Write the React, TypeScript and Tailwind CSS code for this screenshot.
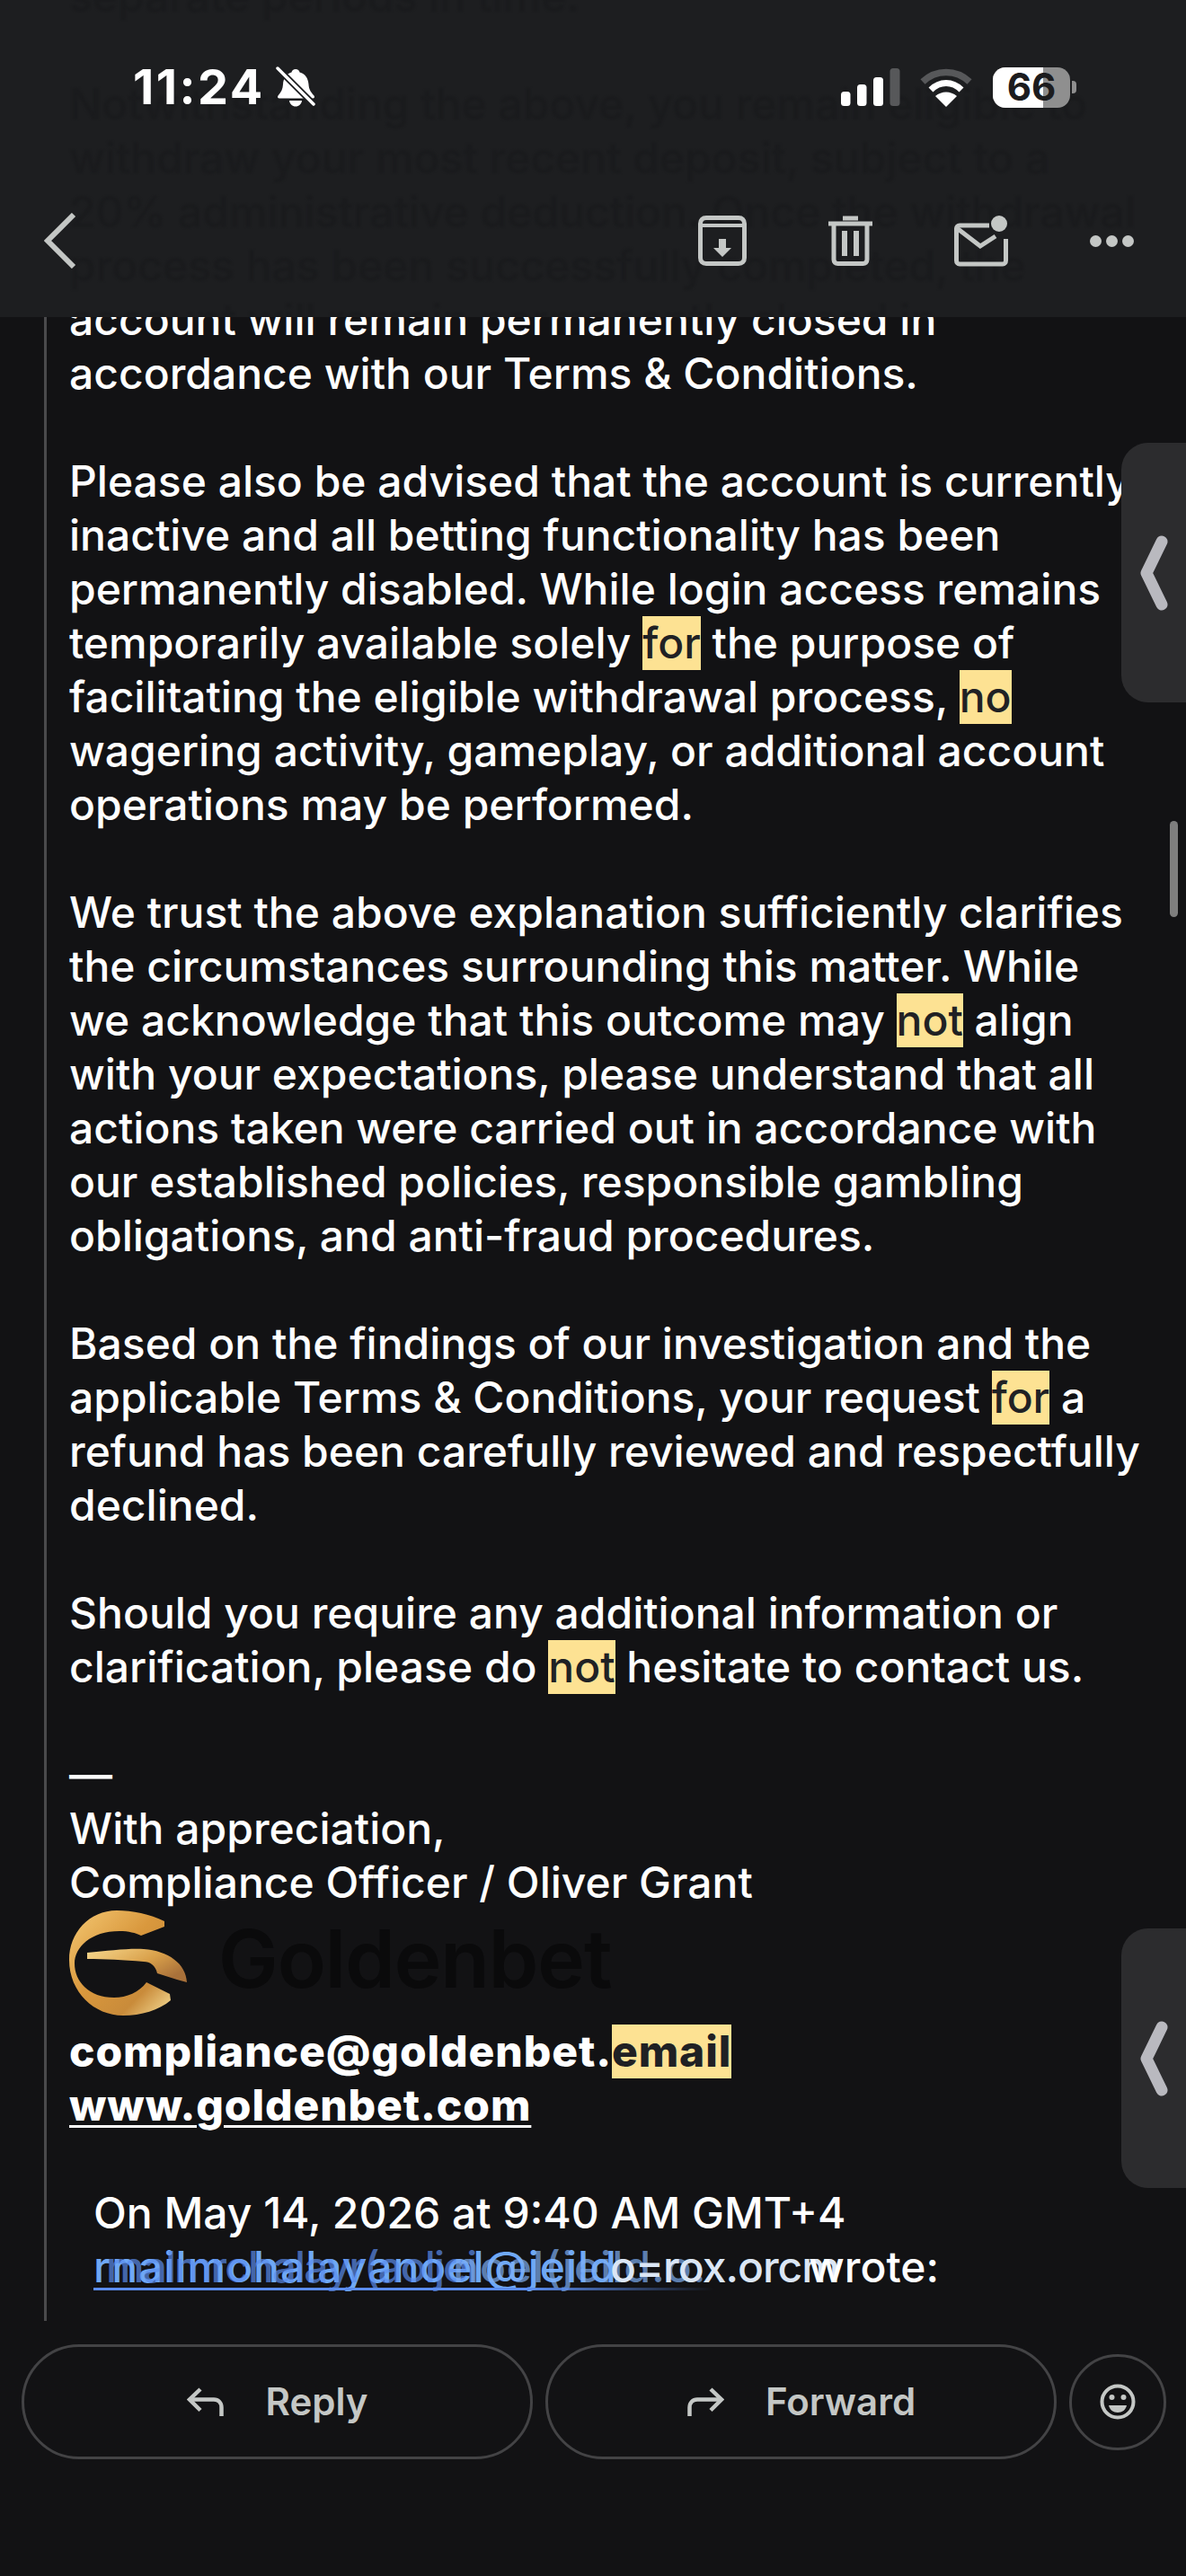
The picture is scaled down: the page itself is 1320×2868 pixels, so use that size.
const Mark = ({ children }: { children: React.ReactNode }) => (
  <span className="inline-block bg-[#fde293] text-[#202124] leading-[60px]">{children}</span>
);

const Bell = () => (
  <svg width="46" height="46" viewBox="0 0 46 46" className="ml-[11px]">
    <path d="M23 3c2.500 0 4 1.500 4.500 3.500C33.500 8 37 13 37.500 20c.300 5 2 8 6 12.500 1 1.200.500 3-1.500 3H5c-2 0-2.500-1.800-1.500-3C7 28.500 8.700 25 9 20c.300-7 4-12 9.500-13.500C19 4.500 20.500 3 23 3z" fill="#fff" />
    <path d="M16 38h14c-.500 4-3.500 6.500-7 6.500s-6.500-2.500-7-6.500z" fill="#fff" />
    <path d="M4 3l40 40" stroke="#1d1e20" strokeWidth="7" />
    <path d="M3 2l40 40" stroke="#fff" strokeWidth="3.500" strokeLinecap="round" />
  </svg>
);

const Signal = () => (
  <svg width="66" height="42" viewBox="0 0 66 42">
    <rect x="0" y="26" width="10.500" height="16" rx="3.500" fill="#fff" />
    <rect x="18" y="18" width="10.500" height="24" rx="3.500" fill="#fff" />
    <rect x="36" y="10" width="11" height="32" rx="3.500" fill="#fff" />
    <rect x="54.500" y="0" width="11" height="42" rx="3.500" fill="#57585a" />
  </svg>
);

const Wifi = () => (
  <svg width="58" height="43" viewBox="0 0 58 43" className="ml-[22px]">
    <path d="M3 15C18 1 40 1 55 15" fill="none" stroke="#57585a" strokeWidth="7.500" />
    <path d="M12 24C22 14 36 14 46 24" fill="none" stroke="#fff" strokeWidth="7" />
    <path d="M29 43L17 31c7-6 17-6 24 0z" fill="#fff" />
  </svg>
);

const Battery = () => (
  <div className="ml-[23px] flex items-center">
    <div className="relative flex h-[45px] w-[86px] items-center justify-center overflow-hidden rounded-[14px] bg-[#8f8f8f]">
      <div className="absolute inset-y-0 left-0 w-[56px] bg-white" />
      <span className="relative text-[42px] font-bold leading-none text-[#1c1c1e]">66</span>
    </div>
    <div className="ml-[2px] h-[14px] w-[5px] rounded-r-[4px] bg-[#8f8f8f]" />
  </div>
);

const Tab = ({ top }: { top: string }) => (
  <div className={`absolute right-0 ${top} flex h-[289px] w-[72px] items-center rounded-l-[30px] bg-[#2c2c2e] pl-[20px]`}>
    <svg width="32" height="84" viewBox="0 0 32 84">
      <path d="M25 7L8 42l17 35" fill="none" stroke="#b9b9bf" strokeWidth="13" strokeLinecap="round" strokeLinejoin="round" />
    </svg>
  </div>
);

export default function App() {
  return (
    <div className="relative h-[2868px] w-[1320px] overflow-hidden bg-[#121214] font-['Inter','Noto_Sans',sans-serif] text-[48px] font-medium leading-[60px] text-white">
      <main className="-mt-[34px]">
        <div className="ml-[49px] h-[2618px] whitespace-nowrap border-l-[3px] border-[#4a4a4c] pl-[25px]">
          <p className="mb-[60px]">
            separate periods in time.
          </p>
          <p className="mb-[60px]">
            Notwithstanding the above, you remain eligible to<br />
            withdraw your most recent deposit, subject to a<br />
            20% administrative deduction. Once the withdrawal<br />
            process has been successfully completed, the<br />
            account will remain permanently closed in<br />
            accordance with our Terms &amp; Conditions.
          </p>
          <p className="mb-[60px]">
            Please also be advised that the account is currently<br />
            inactive and all betting functionality has been<br />
            permanently disabled. While login access remains<br />
            temporarily available solely <Mark>for</Mark> the purpose of<br />
            facilitating the eligible withdrawal process, <Mark>no</Mark><br />
            wagering activity, gameplay, or additional account<br />
            operations may be performed.
          </p>
          <p className="mb-[60px]">
            We trust the above explanation sufficiently clarifies<br />
            the circumstances surrounding this matter. While<br />
            we acknowledge that this outcome may <Mark>not</Mark> align<br />
            with your expectations, please understand that all<br />
            actions taken were carried out in accordance with<br />
            our established policies, responsible gambling<br />
            obligations, and anti-fraud procedures.
          </p>
          <p className="mb-[60px]">
            Based on the findings of our investigation and the<br />
            applicable Terms &amp; Conditions, your request <Mark>for</Mark> a<br />
            refund has been carefully reviewed and respectfully<br />
            declined.
          </p>
          <p className="mb-[60px]">
            Should you require any additional information or<br />
            clarification, please do <Mark>not</Mark> hesitate to contact us.
          </p>
          <p>
            —<br />
            With appreciation,<br />
            Compliance Officer / Oliver Grant
          </p>
          <div className="box-border flex h-[128px] items-center pb-[8px]">
            <svg width="134" height="120" viewBox="0 -2 134 120">
              <defs>
                <linearGradient id="gold" x1="0" y1="0" x2="1" y2="1">
                  <stop offset="0" stopColor="#f4c873" />
                  <stop offset="0.45" stopColor="#d9983d" />
                  <stop offset="0.75" stopColor="#c98b3a" />
                  <stop offset="1" stopColor="#f7e09a" />
                </linearGradient>
                <linearGradient id="arm" x1="0" y1="0" x2="1" y2="0.6">
                  <stop offset="0" stopColor="#f6d88e" />
                  <stop offset="0.6" stopColor="#d9a04a" />
                  <stop offset="1" stopColor="#a9713a" />
                </linearGradient>
              </defs>
              <path d="M106 11C90 3 70-1 53-1 22-1 0 24 0 54c0 36 28 62 60 62 20 0 40-6 53-17l-1-7-26-13C78 90 64 96 50 96 22 96 6 78 6 58 6 40 24 22 56 22c10 0 18 2 24 5l26-10z" fill="url(#gold)" />
              <path d="M20 46c25-2 45-5 63-4 27 2 47 16 48 37l-11-3-22-7c-2-9-8-13-15-13-23-2-43-3-63-3z" fill="url(#arm)" />
            </svg>
            <span className="ml-[32px] pb-[11px] text-[89px] font-semibold leading-none tracking-[-1px] text-[#0a0a0b]">Goldenbet</span>
          </div>
          <p className="font-extrabold tracking-[0.9px]">
            compliance@goldenbet.<Mark>email</Mark><br />
            <span className="underline decoration-[3px] underline-offset-[5px]">www.goldenbet.com</span>
          </p>
          <div className="mt-[60px] pl-[27px]">
            <p>On May 14, 2026 at 9:40 AM GMT+4</p>
            <div className="relative h-[60px]">
              <span className="absolute left-0 top-0 tracking-[1px] text-[#6fa8f5]">rnailmohalayanoel@jeild</span>
              <span className="absolute left-[14px] top-0 tracking-[-2px] text-[#5b8def]/70">malmrchalayr(aoljei</span>
              <span className="absolute left-[400px] top-0 tracking-[1px] text-[#7fb0f5]/70">noel(jeild.o.</span>
              <span className="absolute left-[575px] top-0 tracking-[-1px] text-[#dbe6f5]">o=rox.orcm</span>
              <span className="absolute left-[796px] top-0">wrote:</span>
              <div className="absolute left-0 top-[53px] h-[3px] w-[690px] bg-linear-to-r from-[#5b8def] from-70% to-transparent" />
            </div>
          </div>
        </div>
        <div className="mt-[26px] flex items-center gap-[14px] pl-[24px] text-[42px] font-semibold text-[#c4c7c5]">
          <button className="flex h-[128px] w-[569px] items-center justify-center gap-[46px] rounded-full border-[3px] border-[#434345]">
            <svg width="42" height="33" viewBox="0 0 42 33" fill="none" stroke="#c4c7c5" strokeWidth="4.500">
              <path d="M15 2L3 13.500l12 12" />
              <path d="M3 13.500h27c5 0 8.500 3.500 8.500 9V32" />
            </svg>
            Reply
          </button>
          <button className="flex h-[128px] w-[569px] items-center justify-center gap-[46px] rounded-full border-[3px] border-[#434345]">
            <svg width="42" height="33" viewBox="0 0 42 33" fill="none" stroke="#c4c7c5" strokeWidth="4.500">
              <path d="M27 2l12 11.500-12 12" />
              <path d="M39 13.500H12c-5 0-8.500 3.500-8.500 9V32" />
            </svg>
            Forward
          </button>
          <button className="flex h-[107px] w-[108px] items-center justify-center rounded-full border-[3px] border-[#434345]">
            <svg width="40" height="40" viewBox="0 0 40 40">
              <circle cx="20" cy="20" r="17.500" fill="none" stroke="#c4c7c5" strokeWidth="4" />
              <circle cx="13.500" cy="15" r="3" fill="#c4c7c5" />
              <circle cx="26.500" cy="15" r="3" fill="#c4c7c5" />
              <path d="M10 24h20c-1 5-5 8-10 8s-9-3-10-8z" fill="#c4c7c5" />
            </svg>
          </button>
        </div>
      </main>

      <header className="absolute inset-x-0 top-0 h-[353px] overflow-hidden bg-[#1d1e20]">
        <div aria-hidden className="absolute left-[77px] -top-[34px] whitespace-nowrap text-[#1a1b1d] blur-[1px]">
          separate periods in time.<br /><br />
          Notwithstanding the above, you remain eligible to<br />
          withdraw your most recent deposit, subject to a<br />
          20% administrative deduction. Once the withdrawal<br />
          process has been successfully completed, the<br />
          account will remain permanently closed in
        </div>
        <div className="relative flex h-[50px] translate-y-[72px] items-center pl-[148px] pr-[122px]">
          <span className="text-[54px] font-bold leading-none tracking-[2.500px]">11:24</span>
          <Bell />
          <div className="ml-auto flex items-center">
            <Signal />
            <Wifi />
            <Battery />
          </div>
        </div>
        <div className="relative mt-[186px] flex h-[64px] items-center pl-[49px] pr-[58px]">
          <svg width="36" height="62" viewBox="0 0 36 62" fill="none" stroke="#c4c7c5" strokeWidth="6">
            <path d="M33 2L4 31l29 29" />
          </svg>
          <div className="ml-auto flex items-center gap-[91px]">
            <svg width="54" height="56" viewBox="0 0 54 56" fill="none">
              <path d="M9 2.500h36c4 0 6.500 2.500 6.500 6.500v38c0 4-2.500 6.500-6.500 6.500H9c-4 0-6.500-2.500-6.500-6.500V9c0-4 2.500-6.500 6.500-6.500z" stroke="#c4c7c5" strokeWidth="5" />
              <path d="M3 11h48" stroke="#c4c7c5" strokeWidth="4" />
              <path d="M23 26h8v10h6L27 46 17 36h6z" fill="#c4c7c5" />
            </svg>
            <svg width="49" height="56" viewBox="0 0 49 56" fill="none">
              <path d="M16 3h17" stroke="#c4c7c5" strokeWidth="5" />
              <path d="M0 9h49" stroke="#c4c7c5" strokeWidth="5" />
              <path d="M6 9v40c0 3 2 4.500 4.500 4.500h28c2.500 0 4.500-1.500 4.500-4.500V9" stroke="#c4c7c5" strokeWidth="5" />
              <rect x="15" y="17" width="6" height="28" fill="#c4c7c5" />
              <rect x="28" y="17" width="6" height="28" fill="#c4c7c5" />
            </svg>
            <svg width="60" height="57" viewBox="0 0 60 57" fill="none">
              <path d="M39 11H6C4 11 2.500 12.500 2.500 14.500V50C2.500 52.500 4 54 6 54h48c2 0 3.500-1.500 3.500-4V26" stroke="#c4c7c5" strokeWidth="5" />
              <path d="M3 14l26 20 17-11" stroke="#c4c7c5" strokeWidth="5" />
              <circle cx="50" cy="9" r="9" fill="#c4c7c5" />
            </svg>
            <div className="flex gap-[5px]">
              <div className="h-[13px] w-[13px] rounded-full bg-[#c4c7c5]" />
              <div className="h-[13px] w-[13px] rounded-full bg-[#c4c7c5]" />
              <div className="h-[13px] w-[13px] rounded-full bg-[#c4c7c5]" />
            </div>
          </div>
        </div>
      </header>

      <Tab top="top-[493px]" />
      <Tab top="top-[2147px]" />
      <div className="absolute right-[9px] top-[914px] h-[107px] w-[9px] rounded-full bg-[#7e7e7e]" />
    </div>
  );
}
